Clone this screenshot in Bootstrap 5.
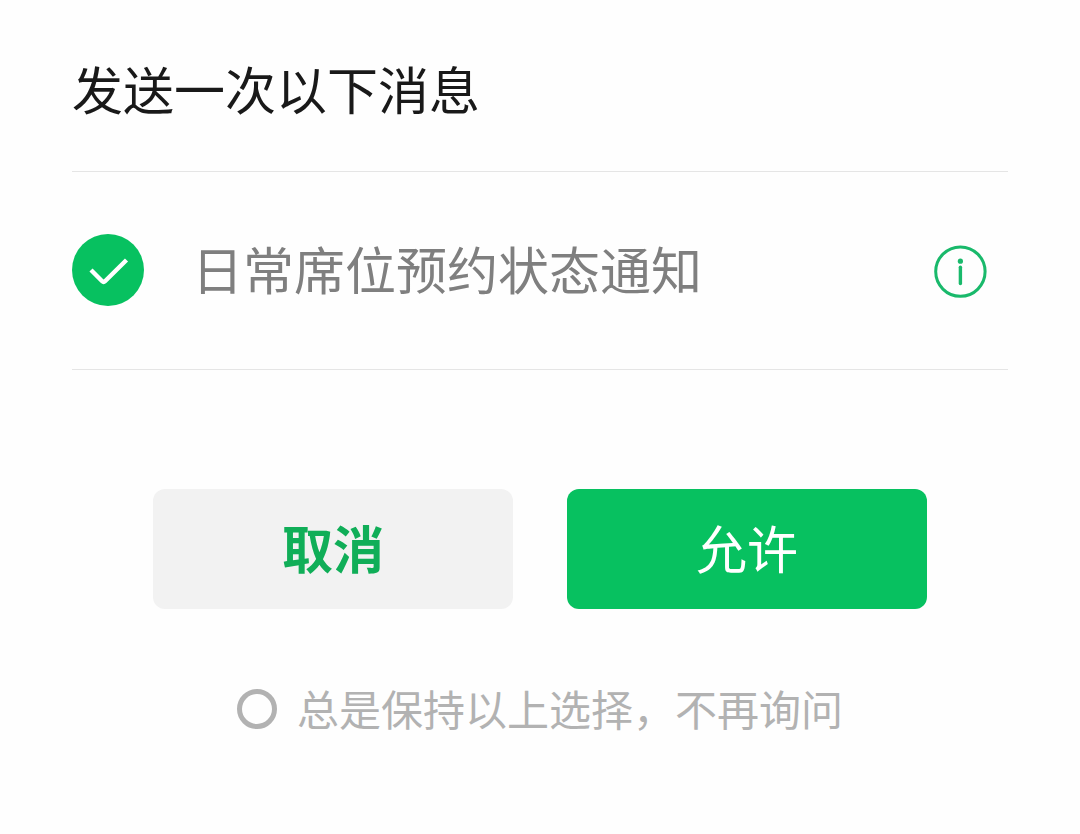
<!DOCTYPE html>
<html lang="zh-CN">
<head>
<meta charset="utf-8">
<meta name="viewport" content="width=device-width, initial-scale=1">
<title>发送一次以下消息</title>
<link href="https://cdn.jsdelivr.net/npm/bootstrap@5.3.0/dist/css/bootstrap.min.css" rel="stylesheet">
<style>
  body { font-family: "Noto Sans CJK SC", sans-serif; background: #fefefe; color: #191919; }
  .sheet { padding: 52px 72px; }
  .sheet-title { font-size: 51px; line-height: 72px; font-weight: 400; padding-bottom: 47px; }
  .message-row { border-top: 1px solid #e5e5e5; border-bottom: 1px solid #e5e5e5; padding: 62px 20px 63px 0; }
  .message-name { font-size: 51px; line-height: 68px; padding-bottom: 4px; color: #7f7f7f; margin-left: 48px; }
  .tick { appearance: none; width: 72px; height: 72px; border: 0; border-radius: 50%; margin: 0; flex: none;
    background: #e5e5e5 center / 72px 72px no-repeat; }
  .tick:checked { background-color: #07c160;
    background-image: url("data:image/svg+xml,%3Csvg xmlns='http://www.w3.org/2000/svg' viewBox='0 0 72 72'%3E%3Cpath d='M19 36L30.2 47.2Q31.6 48.6 33 47.2L54.5 26' fill='none' stroke='%23fff' stroke-width='4.4'/%3E%3C/svg%3E"); }
  .info-button { color: #19b96b; }
  .actions { gap: 54px; padding-top: 119px; }
  .action { width: 360px; height: 120px; border: 0; border-radius: 12px; font-size: 51px; line-height: 72px; padding: 0 0 4px; }
  .action-cancel, .action-cancel:hover { background: #f2f2f2; color: #10ae58; font-weight: 700; }
  .action-allow, .action-allow:hover { background: #07c160; color: #fff; }
  .keep { padding-top: 70px; gap: 20px; font-size: 42px; line-height: 58px; color: #b2b2b2; }
  .keep-label { padding-bottom: 2px; }
  .ring { appearance: none; width: 40px; height: 40px; border: 5px solid #b2b2b2; border-radius: 50%; margin: 0; flex: none; }
  .ring:checked { background: #07c160; border-color: #07c160; }
</style>
</head>
<body>
<main class="sheet">
  <h1 class="sheet-title m-0">发送一次以下消息</h1>
  <div class="message-row d-flex align-items-center">
    <input class="tick" type="checkbox" id="notice" checked>
    <label class="message-name" for="notice">日常席位预约状态通知</label>
    <button class="info-button btn p-0 border-0 ms-auto d-flex" type="button" aria-label="详情">
      <svg width="54" height="58" viewBox="0 0 54 58" fill="none" stroke="currentColor" aria-hidden="true">
        <circle cx="26.4" cy="30.6" r="24.7" stroke-width="3"/>
        <path d="M26.4 26.3V42.6" stroke-width="3.4" stroke-linecap="round"/>
        <circle cx="26.4" cy="20.2" r="2.6" fill="currentColor" stroke="none"/>
      </svg>
    </button>
  </div>
  <div class="actions d-flex justify-content-center">
    <button class="action action-cancel btn" type="button">取消</button>
    <button class="action action-allow btn" type="button">允许</button>
  </div>
  <div class="keep d-flex justify-content-center align-items-center">
    <input class="ring" type="checkbox" id="keep">
    <label class="keep-label" for="keep">总是保持以上选择，不再询问</label>
  </div>
</main>
<script src="https://cdn.jsdelivr.net/npm/bootstrap@5.3.0/dist/js/bootstrap.bundle.min.js"></script>
</body>
</html>
